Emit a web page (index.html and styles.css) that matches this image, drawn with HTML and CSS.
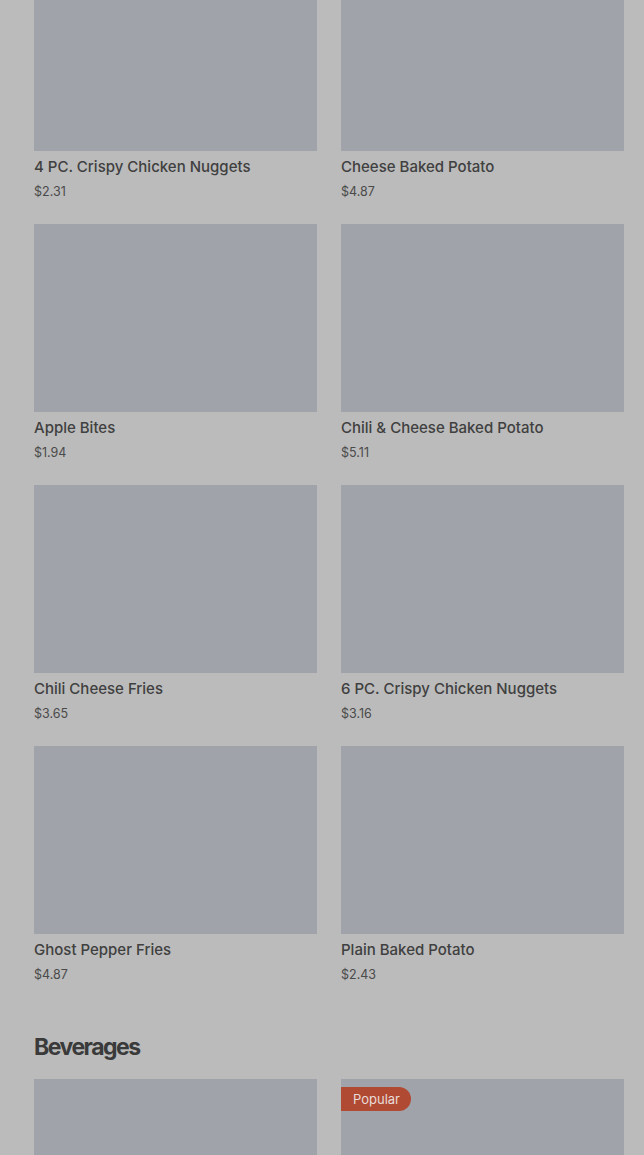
FILE: index.html
```html
<!DOCTYPE html>
<html lang="en">
<head>
    <meta charset="UTF-8">
    <meta name="viewport" content="width=device-width, initial-scale=1.0">
    <title>Menu</title>
    <link rel="stylesheet" href="styles.css">
</head>
<body>
    <div class="menu">
        <!-- Sides -->
        <section class="category category-first">
            <div class="grid">
                <div class="item">
                    <div class="thumb"></div>
                    <div class="name">4 PC. Crispy Chicken Nuggets</div>
                    <div class="price">$2.31</div>
                </div>
                <div class="item">
                    <div class="thumb"></div>
                    <div class="name">Cheese Baked Potato</div>
                    <div class="price">$4.87</div>
                </div>
                <div class="item">
                    <div class="thumb"></div>
                    <div class="name">Apple Bites</div>
                    <div class="price">$1.94</div>
                </div>
                <div class="item">
                    <div class="thumb"></div>
                    <div class="name">Chili &amp; Cheese Baked Potato</div>
                    <div class="price">$5.11</div>
                </div>
                <div class="item">
                    <div class="thumb"></div>
                    <div class="name">Chili Cheese Fries</div>
                    <div class="price">$3.65</div>
                </div>
                <div class="item">
                    <div class="thumb"></div>
                    <div class="name">6 PC. Crispy Chicken Nuggets</div>
                    <div class="price">$3.16</div>
                </div>
                <div class="item">
                    <div class="thumb"></div>
                    <div class="name">Ghost Pepper Fries</div>
                    <div class="price">$4.87</div>
                </div>
                <div class="item">
                    <div class="thumb"></div>
                    <div class="name">Plain Baked Potato</div>
                    <div class="price">$2.43</div>
                </div>
            </div>
        </section>

        <!-- Beverages -->
        <section class="category">
            <h2>Beverages</h2>
            <div class="grid">
                <div class="item">
                    <div class="thumb"></div>
                </div>
                <div class="item">
                    <div class="thumb">
                        <span class="badge">Popular</span>
                    </div>
                </div>
            </div>
        </section>
    </div>
</body>
</html>
```

FILE: styles.css
```css
body {
    margin: 0;
    font-family: Inter, "Noto Sans", sans-serif;
    background-color: #bbbbbb; /* page under the modal backdrop */
    color: #3e3e3e;
    overflow: hidden;
}
.menu {
    padding: 0 20px 0 34px;
}
.category-first {
    margin-top: -37px; /* list is scrolled */
}
.grid {
    display: grid;
    grid-template-columns: 283px 283px;
    column-gap: 24px;
    row-gap: 22px;
}
.thumb {
    position: relative;
    height: 188px;
    background-color: #a0a3a9;
}
.name {
    margin-top: 5px;
    font-size: 15px;
    line-height: 22px;
    font-weight: 500;
    color: #404040;
}
.price {
    margin-top: 4px;
    font-size: 12.5px;
    line-height: 20px;
    color: #4a4a4a;
}
h2 {
    margin: 46px 0 16px;
    font-size: 23px;
    line-height: 32px;
    font-weight: 700;
    letter-spacing: -1.5px;
    color: #3a3a3a;
}
.badge {
    position: absolute;
    top: 8px;
    left: 0;
    padding: 0 11px 0 12px;
    height: 24px;
    line-height: 24px;
    font-size: 13px;
    color: #e9ddd9;
    background-color: #b04a33;
    border-radius: 0 12px 12px 0;
}
```
